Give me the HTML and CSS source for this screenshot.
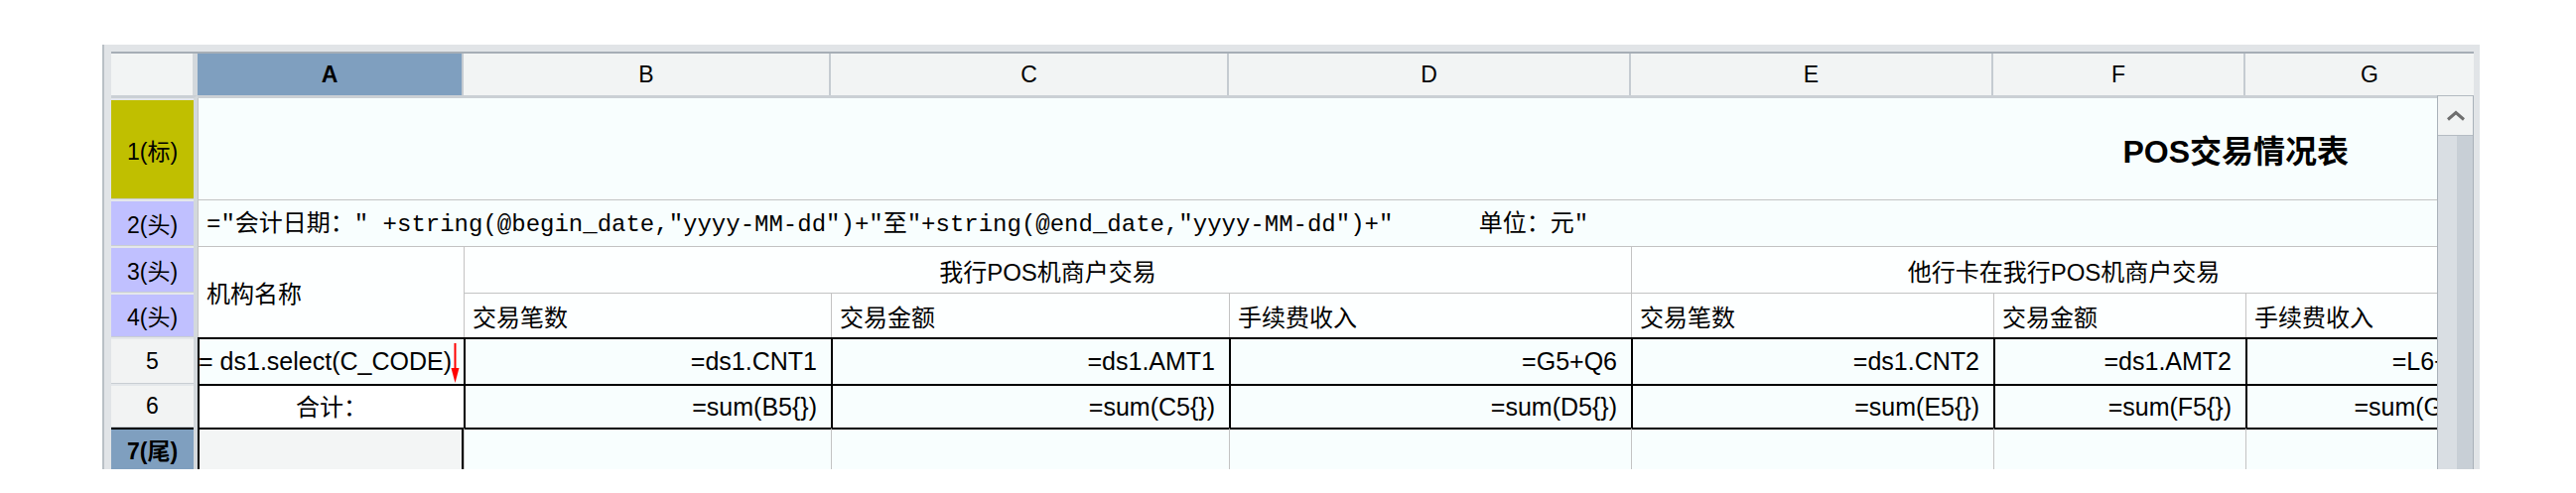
FILE: index.html
```html
<!DOCTYPE html>
<html>
<head>
	<title>POS交易情况表</title>
	<link rel="stylesheet" href="styles.css">
</head>
<body>
	<div class="frame">
		<div class="sheet">
			<div class="corner"></div>
			<div class="colhdrs">
				<div class="ch sel">A</div>
				<div class="ch">B</div>
				<div class="ch">C</div>
				<div class="ch">D</div>
				<div class="ch">E</div>
				<div class="ch">F</div>
				<div class="ch">G</div>
			</div>

			<div class="rowhdrs">
				<div class="rh r1 title">1(标)</div>
				<div class="rh r2 head">2(头)</div>
				<div class="rh r3 head">3(头)</div>
				<div class="rh r4 head">4(头)</div>
				<div class="rh r5">5</div>
				<div class="rh r6">6</div>
				<div class="rh r7 sel">7(尾)</div>
			</div>

			<div class="body">
				<div class="cells">
					<div class="c row1 all">POS交易情况表</div>
					<div class="c row2 all mono">="会计日期：" +string(@begin_date,"yyyy-MM-dd")+"至"+string(@end_date,"yyyy-MM-dd")+"      单位：元"</div>

					<div class="c hd tall">机构名称</div>
					<div class="c hd mid span3">我行POS机商户交易</div>
					<div class="c hd mid span3">他行卡在我行POS机商户交易</div>

					<div class="c hd">交易笔数</div>
					<div class="c hd">交易金额</div>
					<div class="c hd">手续费收入</div>
					<div class="c hd">交易笔数</div>
					<div class="c hd">交易金额</div>
					<div class="c hd">手续费收入</div>

					<div class="c k f num expand"><span class="formula">= ds1.select(C_CODE)</span><svg class="expander" width="9" height="41" viewBox="0 0 9 41"><line x1="4.5" y1="0" x2="4.5" y2="28" stroke="#f00" stroke-width="2" /><polygon points="0.5,25 8.5,25 4.5,40" fill="#f00" /></svg></div>
					<div class="c k f num">=ds1.CNT1</div>
					<div class="c k f num">=ds1.AMT1</div>
					<div class="c k f num">=G5+Q6</div>
					<div class="c k f num">=ds1.CNT2</div>
					<div class="c k f num">=ds1.AMT2</div>
					<div class="c k f num">=L6+Q6</div>

					<div class="c k mid total">合计：</div>
					<div class="c k f num">=sum(B5{})</div>
					<div class="c k f num">=sum(C5{})</div>
					<div class="c k f num">=sum(D5{})</div>
					<div class="c k f num">=sum(E5{})</div>
					<div class="c k f num">=sum(F5{})</div>
					<div class="c k f num">=sum(G5{})</div>

					<div class="c r7 foot"></div>
					<div class="c r7"></div>
					<div class="c r7"></div>
					<div class="c r7"></div>
					<div class="c r7"></div>
					<div class="c r7"></div>
					<div class="c r7"></div>
				</div>

				<div class="vscroll">
					<div class="up">
						<svg width="20" height="11" viewBox="0 0 20 11">
							<polyline points="2,9.5 10,2.5 18,9.5" fill="none" stroke="#6e6e6e" stroke-width="3" />
						</svg>
					</div>
					<div class="track"></div>
				</div>
			</div>
		</div>
	</div>
</body>
</html>
```

FILE: styles.css
```css
body {
	margin: 0;
	background: #fff;
	color: #000;
	font-family: "Liberation Sans", "Noto Sans CJK SC", sans-serif;
	font-size: 23px;
}

.frame {
	margin: 45px 0 0 103px;
	width: 2395px;
	height: 428px;
	box-sizing: border-box;
	background: #e1e4e7;
	border-left: 2px solid #b9c0c6;
	padding: 7px 6px 0 7px;
}

.sheet {
	height: 100%;
	box-sizing: border-box;
	border-top: 2px solid #a6aeb6;
	display: grid;
	grid-template-columns: 87px 1fr;
	grid-template-rows: 42px 1fr;
	overflow: hidden;
}

.corner {
	background: #f2f4f4;
	border-right: 5px solid #d3d8dc;
}

/* column letters */
.colhdrs {
	display: grid;
	grid-template-columns: 268px 370px 401px 405px 365px 254px 252px;
	overflow: hidden;
	background: #d3d8dc;
}

.ch {
	display: flex;
	align-items: center;
	justify-content: center;
	background: #f2f4f4;
	border-right: 2px solid #c5cbd1;
}

.ch.sel {
	background: #7f9fbf;
	font-weight: bold;
}

/* row numbers */
.rowhdrs {
	display: flex;
	flex-direction: column;
	border-top: 3px solid #cbd0d5;
	border-right: 4px solid #d3d8dc;
	background: #dde1e5;
	overflow: hidden;
}

.rh {
	display: flex;
	align-items: center;
	justify-content: center;
	box-sizing: border-box;
	background: #f2f3f3;
	border-top: 2px solid #e4e7ea;
	border-bottom: 1px solid #c9ced3;
	flex: none;
}

.rh.title { background: #c0bf00; }
.rh.head { background: #c0c0ff; }
.rh.sel { background: #7f9fbf; font-weight: bold; }

.r1 { height: 102px; }
.r2 { height: 47px; }
.r3 { height: 47px; }
.r4 { height: 45px; }
.r5 { height: 47px; }
.r6 { height: 44px; }
.rh.r7 { height: 42px; border-bottom: 0; }

.body {
	display: flex;
	min-height: 0;
}

.cells {
	width: 2256px;
	flex: none;
	overflow: hidden;
	border-top: 3px solid #cbd0d5;
	display: grid;
	grid-template-columns: 268px 370px 401px 405px 365px 254px 252px;
	grid-template-rows: 102px 47px 47px 45px 47px 44px 60px;
	background: #f8fefe;
	font-size: 24px;
}

.c {
	display: flex;
	align-items: center;
	box-sizing: border-box;
	min-width: 0;
	padding: 0 8px;
	white-space: pre;
	overflow: hidden;
	background: #f8fefe;
	border-left: 1px solid #c3c3c3;
	border-top: 1px solid #c3c3c3;
}

.all { grid-column: 1 / -1; }
.span3 { grid-column: span 3; }
.tall { grid-row: span 2; }

.row1 {
	border-top: 0;
	justify-content: flex-end;
	padding-right: 148px;
	font-size: 32px;
	font-weight: bold;
}

.mono {
	font-family: "Liberation Mono", "Noto Sans CJK SC", monospace;
	padding-bottom: 6px;
}

.hd { background: #fdffff; }
.mid { justify-content: center; }

.k {
	border-left: 2px solid #000;
	border-top: 2px solid #000;
}

.f {
	justify-content: flex-end;
	padding-right: 14px;
	font-size: 25px;
}

.expand {
	position: relative;
	padding-right: 12px;
}

.formula { flex: none; }

.expander {
	position: absolute;
	right: 4px;
	top: 4px;
}

.total {
	background: #fff;
	padding-bottom: 4px;
}

.r7 { border-top: 2px solid #000; }

.foot {
	background: #f3f5f5;
	border-left: 2px solid #000;
	border-right: 2px solid #000;
}

/* vertical scrollbar */
.vscroll {
	width: 37px;
	flex: none;
	display: flex;
	flex-direction: column;
	box-sizing: border-box;
	border-left: 1px solid #a9b1b9;
	border-right: 1px solid #a9b1b9;
	border-top: 1px solid #b3bac1;
}

.up {
	height: 39px;
	flex: none;
	display: flex;
	align-items: center;
	justify-content: center;
	background: #f1f3f3;
	border-bottom: 1px solid #b5bcc3;
}

.track {
	flex: 1;
	background: linear-gradient(to right, #d9dee3 0 54%, #c8cfd6 54% 100%);
}
```
